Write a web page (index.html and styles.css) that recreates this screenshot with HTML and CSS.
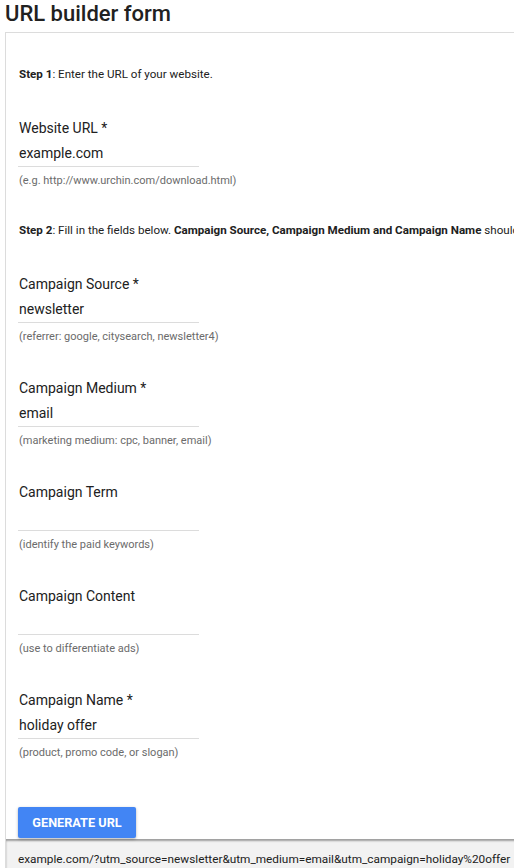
FILE: index.html
```html
<!DOCTYPE html>
<html>
<head>
<meta charset="utf-8">
<title>URL builder form</title>
<link rel="stylesheet" href="styles.css">
</head>
<body>
<div class="page">
  <h1 class="title">URL builder form</h1>
  <div class="card">
    <div class="card-body">
      <p class="step"><b>Step 1</b>: Enter the URL of your website.</p>
      <div class="field">
        <div class="label">Website URL *</div>
        <div class="input">example.com</div>
        <div class="hint">(e.g. http://www.urchin.com/download.html)</div>
      </div>
      <p class="step"><b>Step 2</b>: Fill in the fields below. <b>Campaign Source, Campaign Medium and Campaign Name</b> should always be used.</p>
      <div class="field">
        <div class="label">Campaign Source *</div>
        <div class="input">newsletter</div>
        <div class="hint">(referrer: google, citysearch, newsletter4)</div>
      </div>
      <div class="field">
        <div class="label">Campaign Medium *</div>
        <div class="input">email</div>
        <div class="hint">(marketing medium: cpc, banner, email)</div>
      </div>
      <div class="field">
        <div class="label">Campaign Term</div>
        <div class="input"></div>
        <div class="hint">(identify the paid keywords)</div>
      </div>
      <div class="field">
        <div class="label">Campaign Content</div>
        <div class="input"></div>
        <div class="hint">(use to differentiate ads)</div>
      </div>
      <div class="field">
        <div class="label">Campaign Name *</div>
        <div class="input">holiday offer</div>
        <div class="hint">(product, promo code, or slogan)</div>
      </div>
      <div class="actions">
        <button class="btn">GENERATE URL</button>
      </div>
    </div>
    <div class="result">example.com/?utm_source=newsletter&amp;utm_medium=email&amp;utm_campaign=holiday%20offer</div>
  </div>
</div>
</body>
</html>
```

FILE: styles.css
```css
html, body {
  margin: 0;
  padding: 0;
  overflow: hidden;
  background: #fff;
}
body {
  font-family: Roboto, "Liberation Sans", Arial, sans-serif;
  color: #212121;
}
.page {
  padding: 0 0 0 5px;
  width: 760px;
}
.title {
  margin: 0 0 4px 0;
  font-size: 22px;
  line-height: 28px;
  font-weight: 500;
  color: #212121;
}
.card {
  border: 1px solid #dcdcdc;
  background: #fff;
}
.card-body {
  padding: 33px 12px 0 13px;
  display: flex;
  flex-direction: column;
  gap: 34px;
}
.step {
  margin: 0 0 2px 0;
  font-size: 11.6px;
  line-height: 16px;
  white-space: nowrap;
  color: #212121;
}
.step b {
  font-weight: 700;
}
.field {
  display: flex;
  flex-direction: column;
  margin-left: -1px;
}
.label {
  font-size: 14px;
  line-height: 20px;
  color: #212121;
  margin-left: 1px;
}
.input {
  margin-top: 5px;
  width: 180px;
  height: 20px;
  padding: 0 0 3px 1px;
  font-size: 14px;
  line-height: 20px;
  border-bottom: 1px solid #dcdcdc;
  color: #212121;
}
.hint {
  margin-top: 7px;
  margin-left: 1px;
  font-size: 11px;
  line-height: 14px;
  color: #6b6b6b;
}
.actions {
  margin-top: 13px;
  margin-left: -1px;
  padding-bottom: 1px;
}
.btn {
  display: block;
  height: 31px;
  width: 118px;
  padding: 0;
  border: none;
  border-radius: 2px;
  background: #4285f4;
  color: #fff;
  font-family: Roboto, "Liberation Sans", Arial, sans-serif;
  font-size: 12.7px;
  font-weight: 700;
  box-shadow: 0 1px 3px rgba(0, 0, 0, 0.3);
}
.result {
  background: #f2f2f2;
  box-shadow: inset 0 2px 2px rgba(0, 0, 0, 0.35);
  padding: 12px 12px 20px 12px;
  font-size: 11.8px;
  line-height: 17px;
  color: #212121;
  white-space: nowrap;
}
```
